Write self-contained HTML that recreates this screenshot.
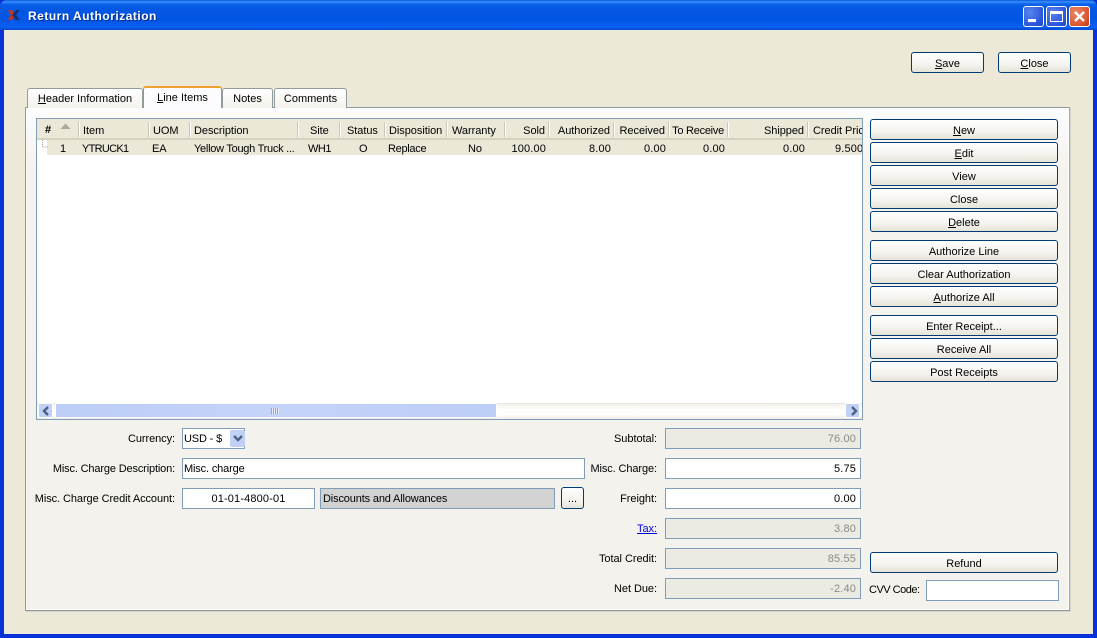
<!DOCTYPE html>
<html><head><meta charset="utf-8"><title>Return Authorization</title>
<style>
html,body{margin:0;padding:0;width:1097px;height:638px;overflow:hidden;background:#0831d9}
body{position:relative;font:11px/13px "Liberation Sans",sans-serif;color:#000}
div,span.a{position:absolute;box-sizing:border-box;white-space:nowrap}
u{text-decoration:underline}
.title{left:0;top:0;width:1097px;height:30px;border-radius:7px 7px 0 0;background:linear-gradient(#0a5be0 0,#3b8ffc 2px,#0a63ea 4px,#0458e2 8px,#0355e4 20px,#0a60f0 27px,#0548d0 30px)}
.body{left:4px;top:30px;width:1089px;height:604px;background:#ece9d8}
.wb{top:6px;width:21px;height:21px;border:1px solid #fff;border-radius:3px;background:radial-gradient(circle at 30% 30%,#5a85ee,#2a55dc 70%,#1f44c0)}
.btn{border:1px solid #003c74;border-radius:3px;background:linear-gradient(#fff,#f4f3ee 60%,#e6e3d8);text-align:center;line-height:23px}
.panel{left:25px;top:107px;width:1045px;height:504px;border:1px solid #919b9c;border-right:1px solid #a4aaa8;border-bottom:1px solid #8f9794;box-shadow:inset -1px -1px 0 #fff,1px 1px 0 #d6d4c6;background:linear-gradient(#fcfcfe,#f4f3ee 60px,#f3f2ec)}
.tab{top:88px;height:20px;border:1px solid #919b9c;border-bottom:0;border-radius:3px 3px 0 0;background:linear-gradient(#fff,#f3f2ec);text-align:center;line-height:20px}
.table{left:36px;top:118px;width:827px;height:302px;border:1px solid #7f9db9;background:#fff;overflow:hidden}
.hd{left:0;top:0;width:826px;height:21px;background:#ebe8d8;border-bottom:2px solid #d6d2c2}
.row{left:10px;top:21px;width:816px;height:15px;background:#ebe8d8}
.sep{top:3px;width:2px;height:15px;border-left:1px solid #cbc7b8;border-right:1px solid #fff}
.h{top:6px;letter-spacing:-.05px}
.c{top:24px;letter-spacing:-.1px}
.r{text-align:right}
.lb{text-align:right;letter-spacing:-.08px}
.lr{text-align:right;letter-spacing:-.05px}
.f{height:21px;border:1px solid #7f9db9;background:#fff;line-height:20px;padding:0 1px;letter-spacing:-.15px}
.ro{background:#ebeae3;color:#8a8a84;text-align:right;padding-right:4px;letter-spacing:.15px}
.rt{text-align:right;padding-right:4px;letter-spacing:.15px}
</style></head><body>
<div class="title"></div>
<div class="body"></div>
<svg style="position:absolute;left:7px;top:9px" width="14" height="13" viewBox="0 0 14 13"><path d="M1 1 L5 1 L8 6 L5 11 L1 11 L4 6Z" fill="#c8341c"/><path d="M5 6 L9 1 L13 1 L9 6 L13 11 L9 11Z" fill="#1a2f70"/></svg>
<div style="left:28px;top:9px;color:#fff;font-weight:bold;font-size:12px;line-height:14px;text-shadow:1px 1px 0 #0a2a8a;letter-spacing:.5px">Return Authorization</div>
<div class="wb" style="left:1023px"><div style="left:4px;top:12px;width:8px;height:3px;background:#fff"></div></div>
<div class="wb" style="left:1046px"><div style="left:3px;top:4px;width:13px;height:11px;border:1px solid #fff;border-top:3px solid #fff"></div></div>
<div class="wb" style="left:1069px;background:radial-gradient(circle at 30% 30%,#e8876a,#d8532c 70%,#b83a18)"><svg style="position:absolute;left:3px;top:3px" width="13" height="13"><path d="M2 2 L11 11 M11 2 L2 11" stroke="#fff" stroke-width="2.4"/></svg></div>

<div class="btn" style="left:911px;top:52px;width:73px;height:21px"><u>S</u>ave</div>
<div class="btn" style="left:998px;top:52px;width:73px;height:21px"><u>C</u>lose</div>

<div class="panel"></div>
<div class="tab" style="left:27px;width:116px"><u>H</u>eader Information</div>
<div class="tab" style="left:222px;width:51px">Notes</div>
<div class="tab" style="left:274px;width:73px">Comments</div>
<div class="tab" style="left:143px;top:86px;width:79px;height:22px;background:#fcfcfe;line-height:21px;border-top:2px solid #f0a030"><u>L</u>ine Items</div>

<div class="table">
<div class="hd"></div>
<div class="h" style="left:8px;top:5px;font-weight:bold">#</div>
<svg style="position:absolute;left:23px;top:4px" width="11" height="7"><path d="M0.5 6 L5.5 0.5 L10.5 6Z" fill="#aca899"/></svg>
<div class="sep" style="left:41px"></div><div class="sep" style="left:111px"></div><div class="sep" style="left:152px"></div><div class="sep" style="left:260px"></div><div class="sep" style="left:302px"></div><div class="sep" style="left:347px"></div><div class="sep" style="left:409px"></div><div class="sep" style="left:467px"></div><div class="sep" style="left:511px"></div><div class="sep" style="left:576px"></div><div class="sep" style="left:631px"></div><div class="sep" style="left:690px"></div><div class="sep" style="left:770px"></div>
<div class="h" style="left:46px">Item</div>
<div class="h" style="left:116px">UOM</div>
<div class="h" style="left:157px">Description</div>
<div class="h" style="left:273px">Site</div>
<div class="h" style="left:310px">Status</div>
<div class="h" style="left:352px">Disposition</div>
<div class="h" style="left:415px">Warranty</div>
<div class="h r" style="left:468px;width:40px">Sold</div>
<div class="h r" style="left:513px;width:60px">Authorized</div>
<div class="h r" style="left:578px;width:50px">Received</div>
<div class="h r" style="left:633px;width:54px;letter-spacing:-.25px">To Receive</div>
<div class="h r" style="left:692px;width:75px">Shipped</div>
<div class="h" style="left:776px;width:50px;overflow:hidden">Credit Price</div>
<div class="row"></div>
<svg style="position:absolute;left:3px;top:21px" width="8" height="10"><path d="M2.5 0 V7 H8" stroke="#a0a0a0" stroke-dasharray="1 1" fill="none"/></svg>
<div class="c" style="left:23px">1</div>
<div class="c" style="left:45px;letter-spacing:-.7px">YTRUCK1</div>
<div class="c" style="left:115px">EA</div>
<div class="c" style="left:157px;letter-spacing:-.27px">Yellow Tough Truck ...</div>
<div class="c" style="left:271px;letter-spacing:-.5px">WH1</div>
<div class="c" style="left:322px">O</div>
<div class="c" style="left:351px;letter-spacing:-.3px">Replace</div>
<div class="c" style="left:431px">No</div>
<div class="c r" style="left:468px;width:41px;letter-spacing:.15px">100.00</div>
<div class="c r" style="left:513px;width:61px;letter-spacing:.15px">8.00</div>
<div class="c r" style="left:578px;width:51px;letter-spacing:.15px">0.00</div>
<div class="c r" style="left:633px;width:55px;letter-spacing:.15px">0.00</div>
<div class="c r" style="left:692px;width:76px;letter-spacing:.15px">0.00</div>
<div class="c" style="left:798px;width:28px;overflow:hidden;letter-spacing:.15px">9.5000</div>
<!-- scrollbar -->
<div style="left:0;top:284px;width:826px;height:16px;background:linear-gradient(#f3f2ec,#fefefb 40%,#fff 70%,#eeede5);border-top:1px solid #e8e6dc"></div>
<div style="left:1px;top:284px;width:15px;height:15px;border:1px solid #fff;border-radius:2px;background:#c1d0f5"><svg style="position:absolute;left:3px;top:2px" width="8" height="10"><path d="M6 1 L2 5 L6 9" stroke="#4d6185" stroke-width="2.4" fill="none"/></svg></div>
<div style="left:18px;top:284px;width:442px;height:15px;border:1px solid #fff;border-radius:2px;background:linear-gradient(90deg,#bccdf7,#c4d3f8 50%,#bccdf7)"><div style="left:215px;top:4px;width:8px;height:6px;background:repeating-linear-gradient(90deg,#8ea4dc 0 1px,#e6ecfc 1px 2px)"></div></div>
<div style="left:808px;top:284px;width:15px;height:15px;border:1px solid #fff;border-radius:2px;background:#c1d0f5"><svg style="position:absolute;left:4px;top:2px" width="8" height="10"><path d="M2 1 L6 5 L2 9" stroke="#4d6185" stroke-width="2.4" fill="none"/></svg></div>
</div>

<div class="btn" style="left:870px;top:119px;width:188px;height:21px"><u>N</u>ew</div>
<div class="btn" style="left:870px;top:142px;width:188px;height:21px"><u>E</u>dit</div>
<div class="btn" style="left:870px;top:165px;width:188px;height:21px">View</div>
<div class="btn" style="left:870px;top:188px;width:188px;height:21px">Close</div>
<div class="btn" style="left:870px;top:211px;width:188px;height:21px"><u>D</u>elete</div>
<div class="btn" style="left:870px;top:240px;width:188px;height:21px">Authorize Line</div>
<div class="btn" style="left:870px;top:263px;width:188px;height:21px">Clear Authorization</div>
<div class="btn" style="left:870px;top:286px;width:188px;height:21px"><u>A</u>uthorize All</div>
<div class="btn" style="left:870px;top:315px;width:188px;height:21px">Enter Receipt...</div>
<div class="btn" style="left:870px;top:338px;width:188px;height:21px">Receive All</div>
<div class="btn" style="left:870px;top:361px;width:188px;height:21px">Post Receipts</div>
<div class="btn" style="left:870px;top:552px;width:188px;height:21px">Refund</div>

<div class="lb" style="left:20px;width:155px;top:433px">Currency:</div>
<div class="lb" style="left:20px;width:155px;top:463px;letter-spacing:-.15px">Misc. Charge Description:</div>
<div class="lb" style="left:20px;width:155px;top:493px">Misc. Charge Credit Account:</div>
<div class="f" style="left:182px;top:428px;width:63px">USD - $<div style="left:47px;top:1px;width:15px;height:17px;background:#c1d0f5;border-radius:2px"><svg style="position:absolute;left:3px;top:5px" width="10" height="8"><path d="M1 1 L5 5 L9 1" stroke="#4d6185" stroke-width="2.4" fill="none"/></svg></div></div>
<div class="f" style="left:182px;top:458px;width:403px">Misc. charge</div>
<div class="f" style="left:182px;top:488px;width:133px;text-align:center;letter-spacing:.15px">01-01-4800-01</div>
<div class="f" style="left:320px;top:488px;width:235px;background:#d2d2d2;padding-left:2px">Discounts and Allowances</div>
<div class="btn" style="left:561px;top:487px;width:23px;height:22px;line-height:22px">...</div>

<div class="lr" style="left:570px;width:87px;top:433px">Subtotal:</div>
<div class="lr" style="left:570px;width:87px;top:463px;letter-spacing:-.1px">Misc. Charge:</div>
<div class="lr" style="left:570px;width:87px;top:493px">Freight:</div>
<div class="lr" style="left:570px;width:87px;top:523px;color:#0000e0"><u>Tax:</u></div>
<div class="lr" style="left:570px;width:87px;top:553px">Total Credit:</div>
<div class="lr" style="left:570px;width:87px;top:583px">Net Due:</div>
<div class="f ro" style="left:665px;top:428px;width:196px">76.00</div>
<div class="f rt" style="left:665px;top:458px;width:196px">5.75</div>
<div class="f rt" style="left:665px;top:488px;width:196px">0.00</div>
<div class="f ro" style="left:665px;top:518px;width:196px">3.80</div>
<div class="f ro" style="left:665px;top:548px;width:196px">85.55</div>
<div class="f ro" style="left:665px;top:578px;width:196px">-2.40</div>

<div class="lb" style="left:869px;top:584px;letter-spacing:-.5px">CVV Code:</div>
<div class="f" style="left:926px;top:580px;width:133px"></div>
</body></html>
